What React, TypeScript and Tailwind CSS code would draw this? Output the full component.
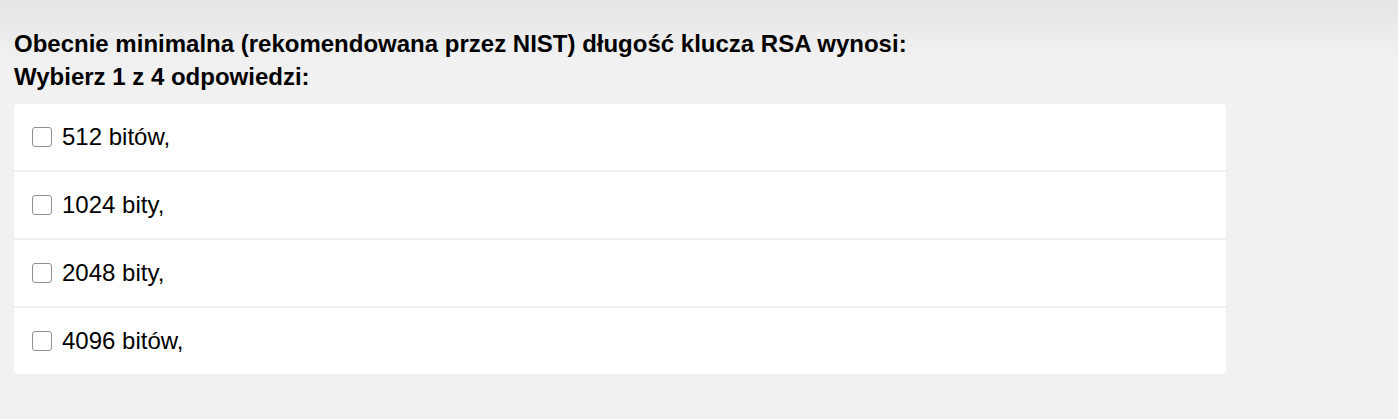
const answers = ['512 bitów,', '1024 bity,', '2048 bity,', '4096 bitów,']

export default function App() {
  return (
    <div className="min-h-[419px] bg-[linear-gradient(to_bottom,#e5e5e5_0px,#f1f1f1_60px,#f1f1f1_100%)] px-[14px] pt-[27px] font-['Liberation_Sans',Arial,sans-serif] text-black">
      {/* Question */}
      <div className="text-[24px] font-bold leading-[33px]">
        <p>Obecnie minimalna (rekomendowana przez NIST) długość klucza RSA wynosi:</p>
        <p>Wybierz 1 z 4 odpowiedzi:</p>
      </div>

      {/* Answers */}
      <div className="mt-[11px] flex w-[1212px] flex-col gap-[2px] overflow-hidden rounded-[4px]">
        {answers.map(a => (
          <label key={a} className="flex h-[66px] items-center bg-white pl-[18px]">
            <span className="h-[20px] w-[20px] shrink-0 rounded-[3px] border border-[#8f8f9d] bg-white" />
            <span className="ml-[10px] text-[24px]">{a}</span>
          </label>
        ))}
      </div>
    </div>
  )
}
